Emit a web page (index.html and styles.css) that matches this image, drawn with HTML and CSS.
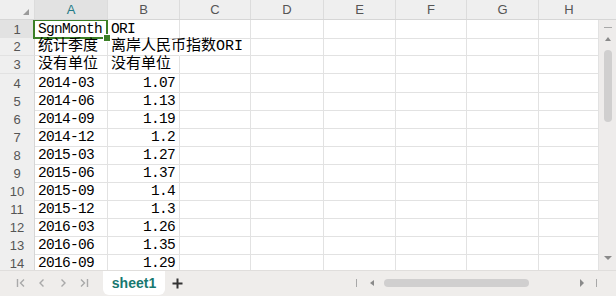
FILE: index.html
```html
<!DOCTYPE html>
<html lang="zh">
<head>
    <meta charset="UTF-8">
    <title>sheet1</title>
    <link rel="stylesheet" href="styles.css">
</head>
<body>
    <div class="sheet">
        <div class="col-head">
            <div class="corner"><span class="corner-mark"></span></div>
            <div class="ch active">A</div>
            <div class="ch">B</div>
            <div class="ch">C</div>
            <div class="ch">D</div>
            <div class="ch">E</div>
            <div class="ch">F</div>
            <div class="ch">G</div>
            <div class="ch last">H</div>
        </div>

        <div class="body">
            <div class="grid">
                <div class="row">
                    <div class="rh active">1</div>
                    <div class="cell selected">SgnMonth</div>
                    <div class="cell">ORI</div>
                    <div class="cell"></div><div class="cell"></div><div class="cell"></div>
                    <div class="cell"></div><div class="cell"></div><div class="cell"></div>
                </div>
                <div class="row">
                    <div class="rh">2</div>
                    <div class="cell zh">统计季度</div>
                    <div class="cell zh spill">离岸人民币指数ORI</div>
                    <div class="cell"></div><div class="cell"></div><div class="cell"></div>
                    <div class="cell"></div><div class="cell"></div><div class="cell"></div>
                </div>
                <div class="row">
                    <div class="rh">3</div>
                    <div class="cell zh">没有单位</div>
                    <div class="cell zh">没有单位</div>
                    <div class="cell"></div><div class="cell"></div><div class="cell"></div>
                    <div class="cell"></div><div class="cell"></div><div class="cell"></div>
                </div>
                <div class="row">
                    <div class="rh">4</div>
                    <div class="cell">2014-03</div>
                    <div class="cell num">1.07</div>
                    <div class="cell"></div><div class="cell"></div><div class="cell"></div>
                    <div class="cell"></div><div class="cell"></div><div class="cell"></div>
                </div>
                <div class="row">
                    <div class="rh">5</div>
                    <div class="cell">2014-06</div>
                    <div class="cell num">1.13</div>
                    <div class="cell"></div><div class="cell"></div><div class="cell"></div>
                    <div class="cell"></div><div class="cell"></div><div class="cell"></div>
                </div>
                <div class="row">
                    <div class="rh">6</div>
                    <div class="cell">2014-09</div>
                    <div class="cell num">1.19</div>
                    <div class="cell"></div><div class="cell"></div><div class="cell"></div>
                    <div class="cell"></div><div class="cell"></div><div class="cell"></div>
                </div>
                <div class="row">
                    <div class="rh">7</div>
                    <div class="cell">2014-12</div>
                    <div class="cell num">1.2</div>
                    <div class="cell"></div><div class="cell"></div><div class="cell"></div>
                    <div class="cell"></div><div class="cell"></div><div class="cell"></div>
                </div>
                <div class="row">
                    <div class="rh">8</div>
                    <div class="cell">2015-03</div>
                    <div class="cell num">1.27</div>
                    <div class="cell"></div><div class="cell"></div><div class="cell"></div>
                    <div class="cell"></div><div class="cell"></div><div class="cell"></div>
                </div>
                <div class="row">
                    <div class="rh">9</div>
                    <div class="cell">2015-06</div>
                    <div class="cell num">1.37</div>
                    <div class="cell"></div><div class="cell"></div><div class="cell"></div>
                    <div class="cell"></div><div class="cell"></div><div class="cell"></div>
                </div>
                <div class="row">
                    <div class="rh">10</div>
                    <div class="cell">2015-09</div>
                    <div class="cell num">1.4</div>
                    <div class="cell"></div><div class="cell"></div><div class="cell"></div>
                    <div class="cell"></div><div class="cell"></div><div class="cell"></div>
                </div>
                <div class="row">
                    <div class="rh">11</div>
                    <div class="cell">2015-12</div>
                    <div class="cell num">1.3</div>
                    <div class="cell"></div><div class="cell"></div><div class="cell"></div>
                    <div class="cell"></div><div class="cell"></div><div class="cell"></div>
                </div>
                <div class="row">
                    <div class="rh">12</div>
                    <div class="cell">2016-03</div>
                    <div class="cell num">1.26</div>
                    <div class="cell"></div><div class="cell"></div><div class="cell"></div>
                    <div class="cell"></div><div class="cell"></div><div class="cell"></div>
                </div>
                <div class="row">
                    <div class="rh">13</div>
                    <div class="cell">2016-06</div>
                    <div class="cell num">1.35</div>
                    <div class="cell"></div><div class="cell"></div><div class="cell"></div>
                    <div class="cell"></div><div class="cell"></div><div class="cell"></div>
                </div>
                <div class="row">
                    <div class="rh">14</div>
                    <div class="cell">2016-09</div>
                    <div class="cell num">1.29</div>
                    <div class="cell"></div><div class="cell"></div><div class="cell"></div>
                    <div class="cell"></div><div class="cell"></div><div class="cell"></div>
                </div>
            </div>

            <div class="vscroll">
                <span class="vs-line"></span>
                <span class="tri up"></span>
                <span class="vs-thumb"></span>
                <span class="tri down"></span>
            </div>
        </div>

        <div class="tabbar">
            <div class="nav">
                <span class="nav-btn">
                    <svg width="10" height="10" viewBox="0 0 10 10"><path d="M1.5 1v8M8 1.5L4.5 5 8 8.5" fill="none" stroke="#a9a9a9" stroke-width="1.4"/></svg>
                </span>
                <span class="nav-btn">
                    <svg width="10" height="10" viewBox="0 0 10 10"><path d="M6.5 1.5L3 5l3.5 3.5" fill="none" stroke="#a9a9a9" stroke-width="1.4"/></svg>
                </span>
                <span class="nav-btn">
                    <svg width="10" height="10" viewBox="0 0 10 10"><path d="M3.5 1.5L7 5 3.5 8.5" fill="none" stroke="#a9a9a9" stroke-width="1.4"/></svg>
                </span>
                <span class="nav-btn">
                    <svg width="10" height="10" viewBox="0 0 10 10"><path d="M2 1.5L5.5 5 2 8.5M8.5 1v8" fill="none" stroke="#a9a9a9" stroke-width="1.4"/></svg>
                </span>
            </div>
            <div class="tab">sheet1</div>
            <div class="add">
                <svg width="11" height="11" viewBox="0 0 11 11"><path d="M5.5 0.5v10M0.5 5.5h10" stroke="#333" stroke-width="2"/></svg>
            </div>

            <div class="hscroll">
                <span class="hs-line"></span>
                <span class="tri left"></span>
                <span class="hs-thumb"></span>
                <span class="tri right"></span>
                <span class="hs-line end"></span>
            </div>
        </div>
    </div>
</body>
</html>
```

FILE: styles.css
```css
* {
    margin: 0;
    padding: 0;
    box-sizing: border-box;
}

body {
    width: 616px;
    height: 296px;
    overflow: hidden;
    background: #ffffff;
    font-family: 'Liberation Sans', Arial, sans-serif;
}

.sheet {
    display: flex;
    flex-direction: column;
    height: 296px;
}

/* column headers */
.col-head {
    display: grid;
    grid-template-columns: 35px 73px 72px 71px 73px 72px 71px 72px 1fr;
    height: 20px;
    background: #efefef;
    border-bottom: 1px solid #d6d6d6;
    flex-shrink: 0;
}

.corner {
    position: relative;
    border-right: 1px solid #dcdcdc;
}

.corner-mark {
    position: absolute;
    right: 5px;
    bottom: 4px;
    width: 0;
    height: 0;
    border-left: 6px solid transparent;
    border-bottom: 6px solid #9a9a9a;
}

.ch {
    display: flex;
    align-items: center;
    justify-content: center;
    font-size: 13px;
    color: #555;
    border-right: 1px solid #dcdcdc;
}

.ch.active {
    background: #e2e2e2;
    color: #1f7a86;
}

.ch.last {
    border-right: none;
    padding-right: 17px;
}

/* grid */
.body {
    display: flex;
    height: 250px;
    overflow: hidden;
    flex-shrink: 0;
}

.grid {
    width: 599px;
    overflow: hidden;
}

.row {
    display: grid;
    grid-template-columns: 35px 73px 72px 71px 73px 72px 71px 72px 60px;
    height: 18px;
}

.rh {
    display: flex;
    align-items: center;
    justify-content: center;
    background: #efefef;
    font-size: 13px;
    color: #555;
    border-right: 1px solid #d6d6d6;
    border-bottom: 1px solid #e2e2e2;
}

.rh.active {
    background: #e2e2e2;
}

.cell {
    position: relative;
    border-right: 1px solid #e2e2e2;
    border-bottom: 1px solid #e2e2e2;
    padding: 0 4px 0 3px;
    font-family: 'Liberation Mono', 'Noto Sans CJK SC', monospace;
    font-size: 14.5px;
    letter-spacing: -0.7px;
    line-height: 18px;
    color: #000;
    white-space: nowrap;
}

.cell.zh {
    font-size: 15px;
    letter-spacing: 0;
    line-height: 17px;
}

.cell.num {
    text-align: right;
    padding-right: 4px;
}

.cell.spill {
    border-right-color: transparent;
    overflow: visible;
}

.cell.selected::after {
    content: "";
    position: absolute;
    left: -2px;
    top: -1px;
    right: -1px;
    bottom: -1px;
    border: 2px solid #3b7f26;
}

.cell.selected::before {
    content: "";
    position: absolute;
    right: -4px;
    bottom: -4px;
    width: 6px;
    height: 6px;
    background: #3b7f26;
    border: 1px solid #fff;
    z-index: 1;
}

/* vertical scrollbar */
.vscroll {
    width: 17px;
    background: #eeeceb;
    display: flex;
    flex-direction: column;
    align-items: center;
    padding-top: 7px;
}

.vs-line {
    width: 8px;
    height: 1px;
    background: #a8a8a8;
}

.vs-thumb {
    width: 8px;
    height: 72px;
    border-radius: 4px;
    background: #d0cfcf;
    margin-top: 9px;
}

.tri {
    width: 0;
    height: 0;
}

.tri.up {
    margin-top: 9px;
    border-left: 3px solid transparent;
    border-right: 3px solid transparent;
    border-bottom: 4px solid #8a8a8a;
}

.tri.down {
    margin-top: auto;
    margin-bottom: 10px;
    border-left: 4px solid transparent;
    border-right: 4px solid transparent;
    border-top: 4px solid #8a8a8a;
}

.tri.left {
    margin-left: 13px;
    border-top: 3px solid transparent;
    border-bottom: 3px solid transparent;
    border-right: 4px solid #8a8a8a;
}

.tri.right {
    margin-left: 51px;
    border-top: 4px solid transparent;
    border-bottom: 4px solid transparent;
    border-left: 4px solid #8a8a8a;
}

/* sheet tabs */
.tabbar {
    flex: 1;
    display: flex;
    align-items: flex-start;
    background: #efedeb;
    border-top: 1px solid #e0dedc;
}

.nav {
    display: flex;
    padding-left: 10px;
    height: 24px;
    align-items: center;
}

.nav-btn {
    width: 21px;
    display: flex;
    justify-content: center;
}

.tab {
    margin-left: 9px;
    width: 62px;
    height: 24px;
    background: #ffffff;
    border-radius: 0 0 6px 6px;
    display: flex;
    align-items: center;
    justify-content: center;
    font-size: 14px;
    font-weight: bold;
    color: #17786f;
}

.add {
    width: 24px;
    height: 24px;
    display: flex;
    align-items: center;
    justify-content: center;
}

.hscroll {
    margin-left: auto;
    margin-right: 19px;
    height: 24px;
    display: flex;
    align-items: center;
}

.hs-line {
    width: 1px;
    height: 8px;
    background: #a8a8a8;
}

.hs-line.end {
    margin-left: 12px;
}

.hs-thumb {
    margin-left: 10px;
    width: 145px;
    height: 8px;
    border-radius: 4px;
    background: #d0cfcf;
}
```
